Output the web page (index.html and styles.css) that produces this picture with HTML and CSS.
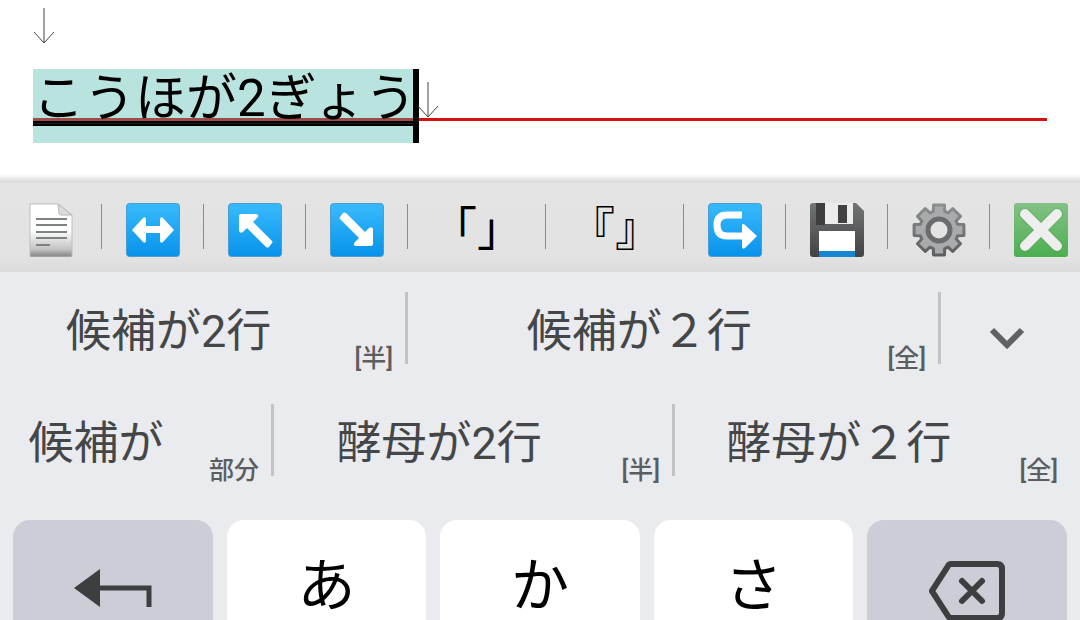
FILE: index.html
```html
<!DOCTYPE html>
<html lang="ja">
<head>
    <meta charset="UTF-8">
    <meta name="viewport" content="width=device-width, initial-scale=1">
    <link rel="stylesheet" href="styles.css">
    <title>候補が2行</title>
</head>
<body>
<svg class="defs" width="0" height="0" aria-hidden="true">
    <defs>
        <linearGradient id="blue" x1="0" y1="0" x2="0" y2="1">
            <stop offset="0.1" stop-color="#34b7fb"/>
            <stop offset="1" stop-color="#0792ea"/>
        </linearGradient>
        <linearGradient id="paper" x1="0" y1="0" x2="0" y2="1">
            <stop offset="0.5" stop-color="#ffffff"/>
            <stop offset="0.85" stop-color="#c4c4c4"/>
            <stop offset="1" stop-color="#808080"/>
        </linearGradient>
        <linearGradient id="disk" x1="0" y1="0" x2="0" y2="1">
            <stop offset="0" stop-color="#717475"/>
            <stop offset="1" stop-color="#414344"/>
        </linearGradient>
        <linearGradient id="gearEdge" x1="0" y1="0" x2="0" y2="1">
            <stop offset="0" stop-color="#8c8f90"/>
            <stop offset="1" stop-color="#5c5e60"/>
        </linearGradient>
        <linearGradient id="green" x1="0" y1="0" x2="0" y2="1">
            <stop offset="0" stop-color="#83c186"/>
            <stop offset="1" stop-color="#4caf50"/>
        </linearGradient>
    </defs>
</svg>

<main class="screen">
    <div class="editor">
        <div class="line">
            <svg class="newline" viewBox="0 0 22 36"><path d="M11 0V35M1 24L11 35L21 24"/></svg>
        </div>
        <div class="line current">
            <span class="composing">こうほが2ぎょう</span>
            <span class="caret"></span>
            <svg class="newline" viewBox="0 0 22 36"><path d="M11 0V35M1 24L11 35L21 24"/></svg>
        </div>
    </div>

    <div class="toolbar">
        <button class="tool" type="button" aria-label="文書">
            <svg viewBox="0 0 54 54">
                <path d="M6 1H34L48 12V53Q48 54 47 54H7Q6 54 6 53Z" fill="url(#paper)" stroke="#bdbdbd" stroke-width="1"/>
                <path d="M34 1L48 12H37Q35 12 35 10Z" fill="#dcdcdf" stroke="#b8b8bb" stroke-width="1"/>
                <path d="M12 16H43M12 22H43M12 29H43M12 35H43M12 42H26" stroke="#7d8283" stroke-width="2"/>
            </svg>
        </button>
        <button class="tool" type="button" aria-label="左右">
            <svg viewBox="0 0 54 54">
                <rect x="0.5" y="0.5" width="53" height="53" rx="3" fill="url(#blue)" stroke="#4a9dce"/>
                <path d="M6 27L17 15Q20 13 20 17V23H34V17Q34 13 37 15L48 27L37 39Q34 41 34 37V30H20V37Q20 41 17 39Z" fill="#fff"/>
            </svg>
        </button>
        <button class="tool" type="button" aria-label="先頭へ">
            <svg viewBox="0 0 54 54">
                <rect x="0.5" y="0.5" width="53" height="53" rx="3" fill="url(#blue)" stroke="#4a9dce"/>
                <path d="M13 11H28Q32 12 29 15L25 19L44 38Q45 39 44 40L41 44Q40 45 38 44L19 25L15 29Q12 31 11 28V13Q11 11 13 11Z" fill="#fff"/>
            </svg>
        </button>
        <button class="tool" type="button" aria-label="末尾へ">
            <svg viewBox="0 0 54 54">
                <rect x="0.5" y="0.5" width="53" height="53" rx="3" fill="url(#blue)" stroke="#4a9dce"/>
                <path d="M41 43H26Q22 42 25 39L29 35L10 16Q9 15 10 14L13 10Q14 9 16 10L35 29L39 25Q42 23 43 26V41Q43 43 41 43Z" fill="#fff"/>
            </svg>
        </button>
        <button class="tool wide" type="button">「」</button>
        <button class="tool wide" type="button">『』</button>
        <button class="tool" type="button" aria-label="やり直し">
            <svg viewBox="0 0 54 54">
                <rect x="0.5" y="0.5" width="53" height="53" rx="3" fill="url(#blue)" stroke="#4a9dce"/>
                <path d="M34 12H19Q9 12 9 22Q9 33 19 33H36" fill="none" stroke="#fff" stroke-width="7"/>
                <path d="M34 22Q35 20 37 22L49 33L37 45Q35 47 34 44Z" fill="#fff"/>
            </svg>
        </button>
        <button class="tool" type="button" aria-label="保存">
            <svg viewBox="0 0 54 54">
                <path d="M3 0H46L54 8V51Q54 54 51 54H3Q0 54 0 51V3Q0 0 3 0Z" fill="url(#disk)"/>
                <rect x="6" y="0" width="9" height="22" fill="#3c3e3f"/>
                <rect x="15" y="0" width="28" height="21" fill="#ececec"/>
                <rect x="28" y="2" width="9" height="18" fill="#414243"/>
                <rect x="9" y="28" width="36" height="20" fill="#fff"/>
                <rect x="9" y="48" width="36" height="6" fill="#1786d0"/>
            </svg>
        </button>
        <button class="tool" type="button" aria-label="設定">
            <svg viewBox="0 0 54 54">
                <path d="M21.3 8.4L21.5 2.1H32.5L32.7 8.4L36.1 9.8L40.7 5.5L48.5 13.3L44.2 17.9L45.6 21.3L51.9 21.5V32.5L45.6 32.7L44.2 36.1L48.5 40.7L40.7 48.5L36.1 44.2L32.7 45.6L32.5 51.9H21.5L21.3 45.6L17.9 44.2L13.3 48.5L5.5 40.7L9.8 36.1L8.4 32.7L2.1 32.5V21.5L8.4 21.3L9.8 17.9L5.5 13.3L13.3 5.5L17.9 9.8Z" fill="#a8aaab" stroke="url(#gearEdge)" stroke-width="3" stroke-linejoin="round"/>
                <circle cx="27" cy="27" r="11" fill="#e3e3e3" stroke="#696b6d" stroke-width="5"/>
            </svg>
        </button>
        <button class="tool" type="button" aria-label="閉じる">
            <svg viewBox="0 0 54 54">
                <rect width="54" height="54" rx="3" fill="url(#green)"/>
                <path d="M11 11L43 43M43 11L11 43" stroke="#4c9f50" stroke-width="11" stroke-linecap="round"/>
                <path d="M11 11L43 43M43 11L11 43" stroke="#eeeeee" stroke-width="10" stroke-linecap="round"/>
            </svg>
        </button>
    </div>

    <div class="candidates">
        <div class="row first">
            <button class="candidate" type="button"><span class="word">候補が2行</span><span class="kind">[半]</span></button>
            <button class="candidate" type="button"><span class="word">候補が２行</span><span class="kind">[全]</span></button>
            <button class="expand" type="button" aria-label="候補を開く">
                <svg viewBox="0 0 36 22"><path d="M3 3L18 18L33 3"/></svg>
            </button>
        </div>
        <div class="row second">
            <button class="candidate" type="button"><span class="word">候補が</span><span class="kind">部分</span></button>
            <button class="candidate" type="button"><span class="word">酵母が2行</span><span class="kind">[半]</span></button>
            <button class="candidate" type="button"><span class="word">酵母が２行</span><span class="kind">[全]</span></button>
        </div>
    </div>

    <div class="keys">
        <button class="key function" type="button" aria-label="戻す">
            <svg class="undo" viewBox="0 0 78 38"><path d="M0 19L26 0V38Z" fill="#3c3e40"/><path d="M24 19H75V38" fill="none" stroke="#3c3e40" stroke-width="5"/></svg>
        </button>
        <button class="key kana" type="button">あ</button>
        <button class="key kana" type="button">か</button>
        <button class="key kana" type="button">さ</button>
        <button class="key function" type="button" aria-label="削除">
            <svg class="erase" viewBox="0 0 76 60">
                <path d="M22 3H68Q73 3 73 8V52Q73 57 68 57H22Q20 57 19 55L3 30L19 5Q20 3 22 3Z"/>
                <path d="M33 20L53 40M53 20L33 40"/>
            </svg>
        </button>
    </div>
</main>
</body>
</html>
```
FILE: styles.css
```css
* {
    box-sizing: border-box;
}
body {
    margin: 0;
    background-color: #e9ebee;
    font-family: Roboto, "Noto Sans CJK JP", sans-serif;
}
button {
    margin: 0;
    padding: 0;
    border: 0;
    background: none;
    font-family: inherit;
    color: inherit;
}
svg {
    display: block;
    flex: none;
}
.defs {
    position: absolute;
}
.screen {
    height: 100vh;
    overflow: hidden;
}

/* editor */
.editor {
    display: flex;
    flex-direction: column;
    justify-content: flex-end;
    height: 174px;
    padding: 0 33px 31px;
    overflow: hidden;
    background-color: #fff;
}
.line {
    display: flex;
    flex: none;
    height: 74px;
}
.current {
    background: linear-gradient(#d51010, #d51010) 0 49px / 100% 3px no-repeat;
}
.composing {
    height: 74px;
    font-size: 51px;
    line-height: 60px;
    color: #000;
    background:
        linear-gradient(#9f4b48, #9f4b48) 0 49px / 100% 3px no-repeat,
        linear-gradient(#000 2px, #222 2px, #222 3px, #000 3px) 0 52px / 100% 5px no-repeat,
        #b9e3de;
}
/* the caret covers the side bearing of the last kana */
.caret {
    width: 6px;
    margin: 0 -2px 0 -3px;
    background-color: #000;
}
.newline {
    width: 22px;
    height: 36px;
    margin-top: 13px;
    fill: none;
    stroke: #444;
    stroke-width: 1;
}

/* toolbar */
.toolbar {
    display: flex;
    height: 98px;
    padding-top: 8px;
    overflow: hidden;
    background: linear-gradient(#fff, #dedede 7px, #d9d9d9 8px, #e4e4e4 9px, #e2e2e2 85px, #dadada);
}
.tool {
    display: flex;
    flex: none;
    align-items: center;
    justify-content: center;
    width: 102px;
    padding-top: 5px;
    background: linear-gradient(#8c8c8c, #8c8c8c) 100% 22px / 1px 45px no-repeat;
}
.tool:last-child {
    background: none;
}
.tool svg {
    width: 54px;
    height: 54px;
}
.wide {
    width: 138px;
    padding-top: 3px;
    font-size: 46px;
    line-height: 60px;
    color: #000;
}

/* candidates */
.row {
    display: grid;
    height: 112px;
}
.first {
    grid-template-columns: 408fr 533fr 139fr;
}
.second {
    grid-template-columns: 274fr 401fr 405fr;
}
.candidate {
    display: flex;
    min-width: 0;
    padding: 20px 15px 10px 0;
    background: linear-gradient(#c2c2c7, #c2c2c7) 100% 20px / 3px 72px no-repeat;
    white-space: nowrap;
}
.second .candidate:last-child {
    padding-right: 22px;
    background: none;
}
.word {
    flex: 1;
    font-size: 45px;
    line-height: 80px;
    color: #444648;
}
.kind {
    align-self: flex-end;
    margin-left: 17px;
    font-size: 25px;
    font-weight: 500;
    line-height: 30px;
    color: #5b5d5f;
}
.expand {
    display: flex;
    justify-content: center;
    padding: 55px 8px 0 0;
}
.expand svg {
    width: 36px;
    height: 22px;
    fill: none;
    stroke: #5f6163;
    stroke-width: 6;
}

/* keyboard */
.keys {
    display: grid;
    grid-template-columns: repeat(5, 1fr);
    gap: 14px;
    padding: 24px 13px;
}
.key {
    display: flex;
    align-items: center;
    justify-content: center;
    height: 136px;
    border-radius: 17px;
    background-color: #fff;
}
.kana {
    padding-bottom: 4px;
    font-size: 58px;
    line-height: 60px;
    color: #000;
}
.function {
    background-color: #cbced6;
}
.undo {
    width: 78px;
    height: 38px;
}
.erase {
    width: 76px;
    height: 60px;
    margin-top: 5px;
    fill: none;
    stroke: #3c3e40;
    stroke-width: 6;
    stroke-linecap: round;
}
```
